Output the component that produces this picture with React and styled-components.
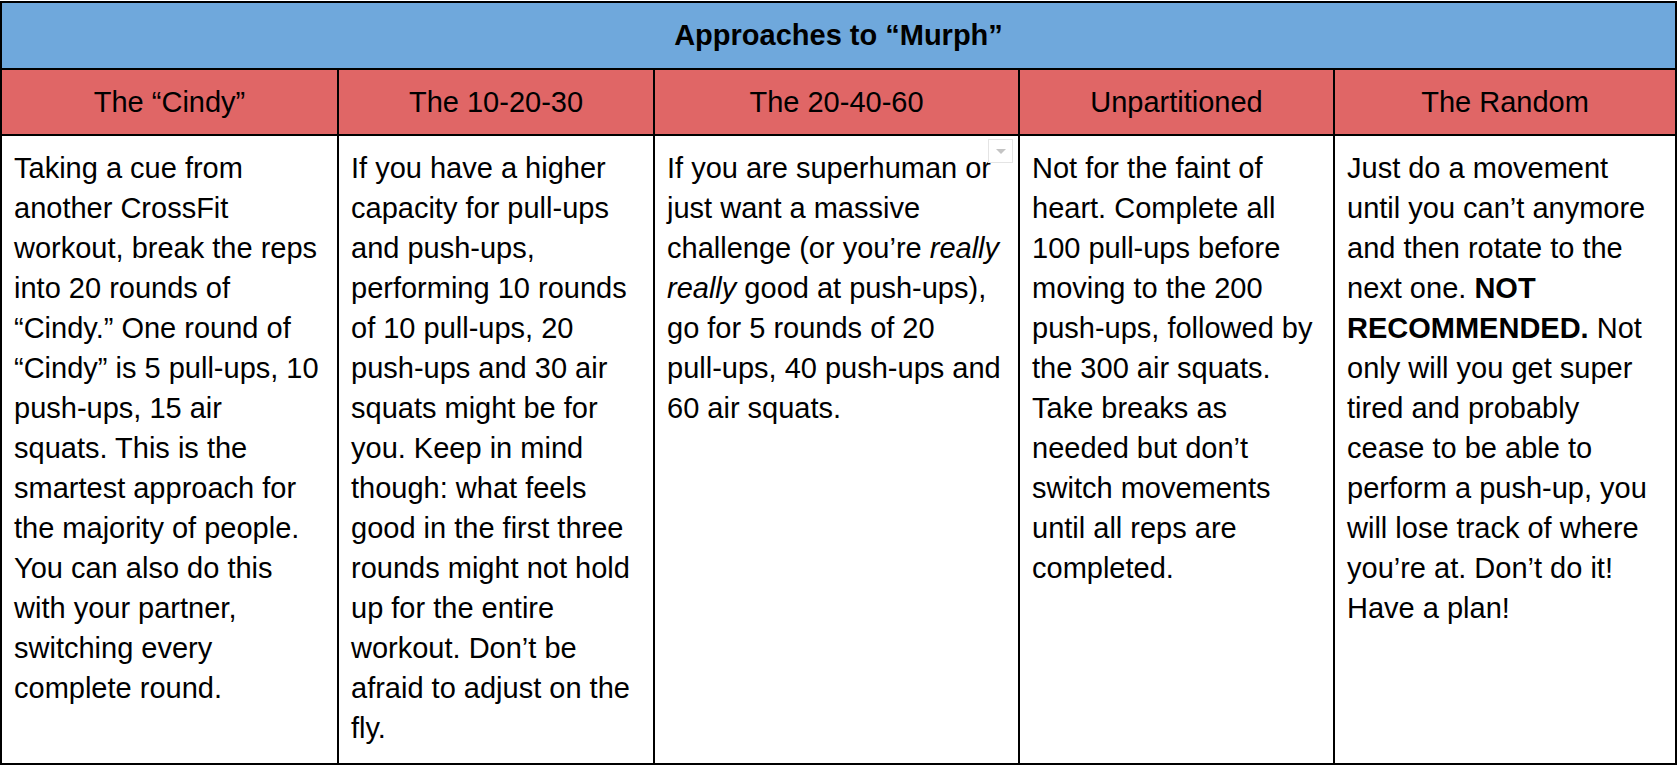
import React from "react";
import styled, { createGlobalStyle } from "styled-components";

const Global = createGlobalStyle`
  html, body { margin: 0; padding: 0; background: #fff; }
  body { font-family: "Liberation Sans", Arial, sans-serif; color: #000; }
`;

const Page = styled.div`
  padding-top: 1px;
  width: 1680px;
  height: 767px;
  background: #fff;
`;

const Sheet = styled.div`
  display: grid;
  width: 1677px;
  box-sizing: border-box;
  grid-template-columns: 335px 314px 363px 313px 340px;
  grid-template-rows: 65px 64px 627px;
  gap: 2px;
  padding: 2px;
  background: #000;
`;

const TitleCell = styled.div`
  grid-column: 1 / -1;
  background: #6fa8dc;
  display: flex;
  align-items: center;
  justify-content: center;
  font-size: 29px;
  font-weight: bold;
  padding-bottom: 1px;
`;

const HeadCell = styled.div`
  background: #e06666;
  display: flex;
  align-items: center;
  justify-content: center;
  font-size: 29px;
  padding-top: 1px;
`;

const BodyCell = styled.div`
  position: relative;
  background: #fff;
  font-size: 29px;
  line-height: 40px;
  padding: 12px 12px 0 12px;
  box-sizing: border-box;
  overflow: hidden;
`;

const Line = styled.span`
  display: block;
  white-space: nowrap;
`;

const DropButton = styled.div`
  position: absolute;
  top: 3px;
  right: 5px;
  width: 25px;
  height: 24px;
  box-sizing: border-box;
  background: #fff;
  border: 1px solid #e4e4e4;
  display: flex;
  align-items: center;
  justify-content: center;
`;

const Caret = styled.span`
  width: 0;
  height: 0;
  border-left: 5px solid transparent;
  border-right: 5px solid transparent;
  border-top: 5px solid #c4c4c4;
`;

const headers = ["The “Cindy”", "The 10-20-30", "The 20-40-60", "Unpartitioned", "The Random"];

const columns = [
  [
    "Taking a cue from",
    "another CrossFit",
    "workout, break the reps",
    "into 20 rounds of",
    "“Cindy.” One round of",
    "“Cindy” is 5 pull-ups, 10",
    "push-ups, 15 air",
    "squats. This is the",
    "smartest approach for",
    "the majority of people.",
    "You can also do this",
    "with your partner,",
    "switching every",
    "complete round.",
  ],
  [
    "If you have a higher",
    "capacity for pull-ups",
    "and push-ups,",
    "performing 10 rounds",
    "of 10 pull-ups, 20",
    "push-ups and 30 air",
    "squats might be for",
    "you. Keep in mind",
    "though: what feels",
    "good in the first three",
    "rounds might not hold",
    "up for the entire",
    "workout. Don’t be",
    "afraid to adjust on the",
    "fly.",
  ],
  [
    "If you are superhuman or",
    "just want a massive",
    <>
      challenge (or you’re <i>really</i>
    </>,
    <>
      <i>really</i> good at push-ups),
    </>,
    "go for 5 rounds of 20",
    "pull-ups, 40 push-ups and",
    "60 air squats.",
  ],
  [
    "Not for the faint of",
    "heart. Complete all",
    "100 pull-ups before",
    "moving to the 200",
    "push-ups, followed by",
    "the 300 air squats.",
    "Take breaks as",
    "needed but don’t",
    "switch movements",
    "until all reps are",
    "completed.",
  ],
  [
    "Just do a movement",
    "until you can’t anymore",
    "and then rotate to the",
    <>
      next one. <b>NOT</b>
    </>,
    <>
      <b>RECOMMENDED.</b> Not
    </>,
    "only will you get super",
    "tired and probably",
    "cease to be able to",
    "perform a push-up, you",
    "will lose track of where",
    "you’re at. Don’t do it!",
    "Have a plan!",
  ],
];

export default function App() {
  return (
    <>
      <Global />
      <Page>
        <Sheet>
          <TitleCell>Approaches to “Murph”</TitleCell>
          {headers.map((h) => (
            <HeadCell key={h}>{h}</HeadCell>
          ))}
          {columns.map((lines, ci) => (
            <BodyCell key={ci}>
              {lines.map((l, li) => (
                <Line key={li}>{l}</Line>
              ))}
              {ci === 2 && (
                <DropButton>
                  <Caret />
                </DropButton>
              )}
            </BodyCell>
          ))}
        </Sheet>
      </Page>
    </>
  );
}
